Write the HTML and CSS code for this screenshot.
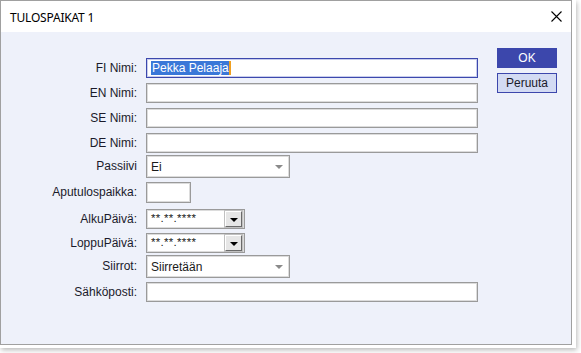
FILE: index.html
```html
<!DOCTYPE html>
<html>
<head>
<meta charset="utf-8">
<link rel="stylesheet" href="styles.css">
</head>
<body>
<div class="frame">
  <div class="window">
    <div class="titlebar">
      <span class="title">TULOSPAIKAT 1</span>
      <svg class="close" width="11" height="11" viewBox="0 0 11 11"><path d="M0.5 0.5 L10.5 10.5 M10.5 0.5 L0.5 10.5" stroke="#000" stroke-width="1.1" fill="none"/></svg>
    </div>
    <div class="content">
      <div class="form">
        <div class="row r25"><label>FI Nimi:</label><div class="field wide focus"><span class="sel">Pekka Pelaaja</span><span class="caret"></span></div></div>
        <div class="row r25"><label>EN Nimi:</label><div class="field wide"></div></div>
        <div class="row r25"><label>SE Nimi:</label><div class="field wide"></div></div>
        <div class="row r22"><label>DE Nimi:</label><div class="field wide"></div></div>
        <div class="row r27"><label class="tall">Passiivi</label><div class="select"><span>Ei</span><span class="arrow"></span></div></div>
        <div class="row r27"><label>Aputulospaikka:</label><div class="field short"></div></div>
        <div class="row r24"><label>AlkuPäivä:</label><div class="date"><span class="mask">**.**.****</span><span class="dbtn"><span class="tri"></span></span></div></div>
        <div class="row r22"><label>LoppuPäivä:</label><div class="date"><span class="mask">**.**.****</span><span class="dbtn"><span class="tri"></span></span></div></div>
        <div class="row r27"><label class="tall">Siirrot:</label><div class="select"><span>Siirretään</span><span class="arrow"></span></div></div>
        <div class="row r25"><label>Sähköposti:</label><div class="field wide"></div></div>
      </div>
      <div class="buttons">
        <button class="btn ok">OK</button>
        <button class="btn cancel">Peruuta</button>
      </div>
    </div>
  </div>
</div>
</body>
</html>
```
FILE: styles.css
```css
html, body {
  margin: 0;
  padding: 0;
  background: #ffffff;
}
body {
  width: 581px;
  height: 353px;
  overflow: hidden;
  font-family: "Liberation Sans", Arial, sans-serif;
  font-size: 12px;
  color: #1a1a1a;
}
.frame {
  width: 576px;
  height: 348px;
  background: #ffffff;
  box-shadow: 1px 2px 5px rgba(0, 0, 0, 0.28);
}
.window {
  width: 570px;
  height: 343px;
  border: 1px solid #a0a0a0;
  display: flex;
  flex-direction: column;
}
.titlebar {
  height: 31px;
  background: #ffffff;
  display: flex;
  align-items: center;
  justify-content: space-between;
  padding: 0 9px 0 9px;
  flex-shrink: 0;
}
.title {
  font-family: "Noto Sans", "Open Sans", sans-serif;
  font-size: 12px;
  color: #000;
  letter-spacing: -0.2px;
  margin-top: 1px;
}
.close {
  display: block;
}
.content {
  flex: 1;
  background: #eef1fa;
  display: flex;
  padding-top: 26px;
}
.form {
  display: flex;
  flex-direction: column;
  width: 477px;
}
.row {
  display: flex;
  align-items: flex-start;
}
.r25 { height: 25px; }
.r22 { height: 22px; }
.r27 { height: 27px; }
.r24 { height: 24px; }
.row label {
  width: 136px;
  margin-right: 9px;
  text-align: right;
  line-height: 20px;
  color: #1a1a2a;
  flex-shrink: 0;
}
.row label.tall {
  line-height: 23px;
}
.field {
  height: 18px;
  background: #fff;
  border: 1px solid #9a9a9a;
  box-shadow: inset 0 0 0 1px #dcdcdc;
  display: flex;
  align-items: center;
  padding-left: 4px;
  box-sizing: content-box;
}
.wide { width: 327px; }
.short { width: 39px; height: 19px; }
.focus {
  border-color: #3c48ad;
  box-shadow: inset 0 0 0 1px #c8cdec;
}
.sel {
  background: #3a78d8;
  color: #fff;
  line-height: 14px;
  padding: 0 0 0 1px;
}
.caret {
  width: 2px;
  height: 14px;
  background: #f0a020;
}
.select {
  width: 144px;
  height: 23px;
  background: #fff;
  border: 1px solid #9a9a9a;
  box-shadow: inset 0 0 0 1px #dcdcdc;
  display: flex;
  align-items: center;
  justify-content: space-between;
  padding: 0 6px 0 4px;
  box-sizing: border-box;
}
.arrow {
  width: 0;
  height: 0;
  border-left: 4px solid transparent;
  border-right: 4px solid transparent;
  border-top: 4px solid #8a8a8a;
}
.date {
  width: 99px;
  height: 20px;
  box-sizing: border-box;
  background: #fff;
  border: 1px solid #9a9a9a;
  box-shadow: inset 0 0 0 1px #dcdcdc;
  display: flex;
  align-items: center;
  justify-content: space-between;
  padding: 0 2px 0 4px;
}
.mask {
  font-size: 11.5px;
  letter-spacing: 0.3px;
  margin-top: -3px;
}
.dbtn {
  width: 17px;
  height: 16px;
  box-sizing: border-box;
  background: #e6e6e6;
  border-top: 1px solid #ffffff;
  border-left: 1px solid #ffffff;
  border-right: 1px solid #6a6a6a;
  border-bottom: 1px solid #6a6a6a;
  box-shadow: 0 0 0 1px #c0c0c0;
  display: flex;
  align-items: center;
  justify-content: center;
}
.tri {
  width: 0;
  height: 0;
  border-left: 4px solid transparent;
  border-right: 4px solid transparent;
  border-top: 4px solid #000;
  margin-top: 1px;
}
.buttons {
  display: flex;
  flex-direction: column;
  gap: 5px;
  margin-left: 19px;
  margin-top: -10px;
}
.btn {
  width: 60px;
  height: 20px;
  font-family: "Liberation Sans", Arial, sans-serif;
  font-size: 12px;
  padding: 0;
  margin: 0;
  box-sizing: border-box;
  cursor: default;
}
.ok {
  background: #3c47ac;
  border: 1px solid #3c47ac;
  color: #ffffff;
}
.cancel {
  background: #d3dbf3;
  border: 1px solid #3c47ac;
  color: #1a1a2a;
}
```
